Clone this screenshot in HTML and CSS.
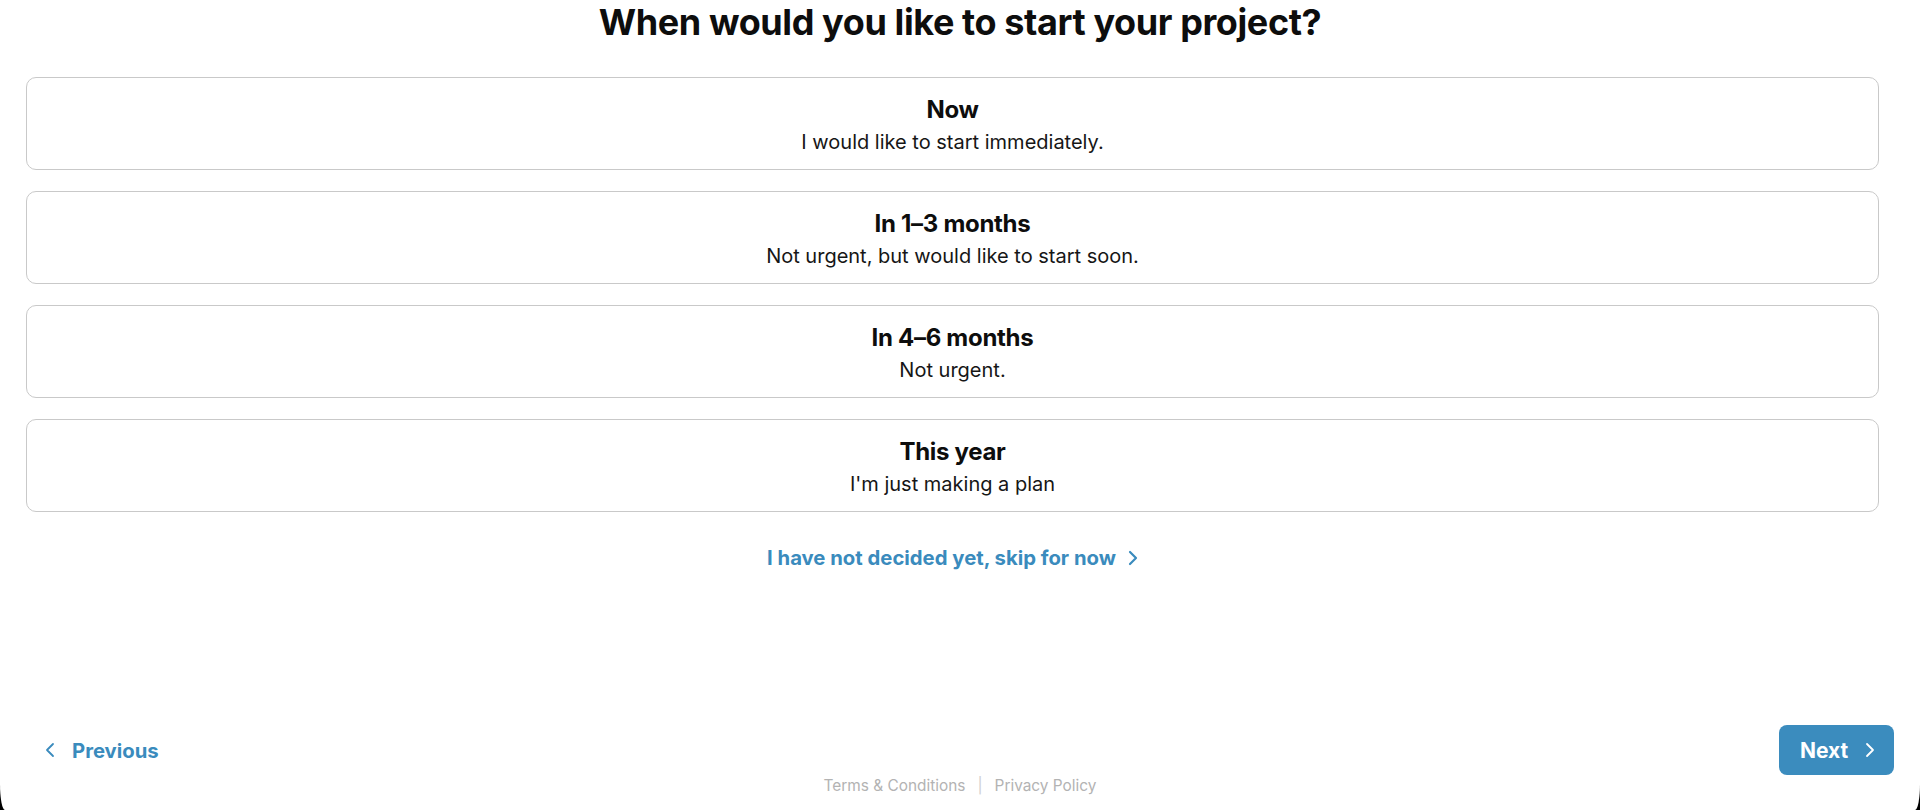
FILE: index.html
```html
<!DOCTYPE html>
<html lang="en">
<head>
<meta charset="utf-8">
<title>When would you like to start your project?</title>
<link rel="stylesheet" href="styles.css">
</head>
<body>
<div class="panel">
  <h1 class="title">When would you like to start your project?</h1>
  <div class="options">
    <div class="option">
      <div class="option-title">Now</div>
      <div class="option-sub">I would like to start immediately.</div>
    </div>
    <div class="option">
      <div class="option-title">In 1–3 months</div>
      <div class="option-sub">Not urgent, but would like to start soon.</div>
    </div>
    <div class="option">
      <div class="option-title">In 4–6 months</div>
      <div class="option-sub">Not urgent.</div>
    </div>
    <div class="option">
      <div class="option-title">This year</div>
      <div class="option-sub">I'm just making a plan</div>
    </div>
  </div>
  <div class="skip-row">
    <a class="skip" href="#">I have not decided yet, skip for now
      <svg class="chev" width="10" height="16" viewBox="0 0 10 16"><polyline points="2,2 8,8 2,14" fill="none" stroke="currentColor" stroke-width="2.2" stroke-linecap="round" stroke-linejoin="round"/></svg>
    </a>
  </div>
  <div class="nav">
    <a class="prev" href="#">
      <svg class="chev" width="10" height="16" viewBox="0 0 10 16"><polyline points="8,2 2,8 8,14" fill="none" stroke="currentColor" stroke-width="1.8" stroke-linecap="round" stroke-linejoin="round"/></svg>
      <span>Previous</span>
    </a>
    <a class="next" href="#">
      <span>Next</span>
      <svg class="chev" width="10" height="16" viewBox="0 0 10 16"><polyline points="2,2 8,8 2,14" fill="none" stroke="currentColor" stroke-width="1.8" stroke-linecap="round" stroke-linejoin="round"/></svg>
    </a>
  </div>
  <div class="footer">
    <a href="#">Terms &amp; Conditions</a>
    <span class="sep">|</span>
    <a href="#">Privacy Policy</a>
  </div>
</div>
</body>
</html>
```

FILE: styles.css
```css
html, body {
  margin: 0;
  padding: 0;
  overflow: hidden;
  background: #000;
}
body {
  font-family: Inter, "Liberation Sans", sans-serif;
  color: #111;
}
.panel {
  width: 1920px;
  height: 810px;
  background: #fff;
  border-bottom-left-radius: 5px 26px;
  border-bottom-right-radius: 5px 26px;
  display: flex;
  flex-direction: column;
}
.title {
  margin: 1px 0 0 0;
  font-size: 36px;
  line-height: 42px;
  font-weight: 700;
  letter-spacing: -0.4px;
  text-align: center;
  color: #0d0d0d;
}
.options {
  margin: 34px 41px 0 26px;
  display: flex;
  flex-direction: column;
  gap: 21px;
}
.option {
  box-sizing: border-box;
  height: 93px;
  border: 1px solid #c9c9c9;
  border-radius: 10px;
  padding-top: 17px;
  text-align: center;
  display: flex;
  flex-direction: column;
  align-items: center;
}
.option-title {
  font-size: 24px;
  line-height: 30px;
  font-weight: 700;
  letter-spacing: -0.3px;
  color: #0d0d0d;
}
.option-sub {
  margin-top: 3px;
  font-size: 20px;
  line-height: 28px;
  font-weight: 400;
  letter-spacing: 0;
  color: #161616;
}
.skip-row {
  margin: 34px 41px 0 26px;
  display: flex;
  justify-content: center;
}
.skip {
  display: flex;
  align-items: center;
  gap: 12px;
  font-size: 20.3px;
  line-height: 24px;
  font-weight: 700;
  letter-spacing: 0;
  color: #3a8bbd;
  text-decoration: none;
}
.nav {
  margin-top: 155px;
  padding: 0 26px 0 45px;
  display: flex;
  justify-content: space-between;
  align-items: center;
  height: 50px;
}
.prev {
  display: flex;
  align-items: center;
  gap: 17px;
  font-size: 20.3px;
  font-weight: 700;
  letter-spacing: 0;
  color: #3a8bbd;
  text-decoration: none;
}
.next {
  box-sizing: border-box;
  width: 115px;
  height: 50px;
  padding-left: 21px;
  display: flex;
  align-items: center;
  gap: 17px;
  background: #3b8cbe;
  border-radius: 8px;
  font-size: 21px;
  font-weight: 700;
  letter-spacing: 0;
  color: #fff;
  text-decoration: none;
}
.chev {
  display: block;
  flex: none;
}
.footer {
  margin-top: 1px;
  display: flex;
  justify-content: center;
  align-items: center;
  gap: 12px;
  font-size: 15.4px;
  line-height: 20px;
  color: #b3b3b3;
}
.footer a {
  color: #b3b3b3;
  text-decoration: none;
}
.sep {
  color: #cfcfcf;
}
```
